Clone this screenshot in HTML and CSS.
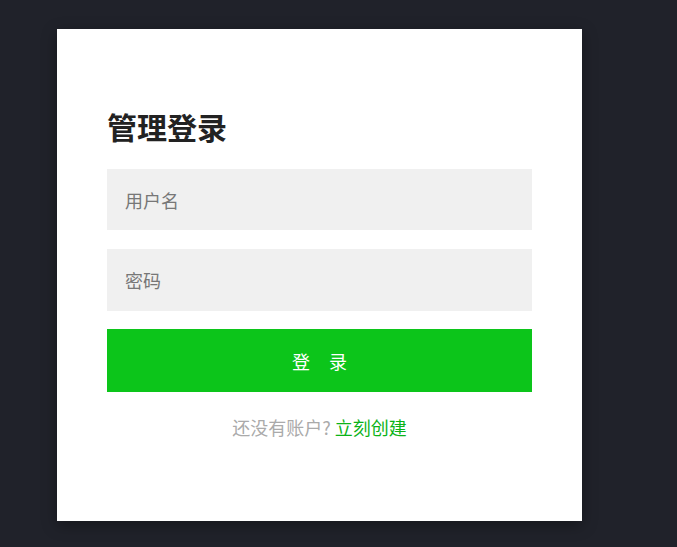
FILE: index.html
```html
<!DOCTYPE html>
<html lang="zh-CN">
<head>
    <meta charset="UTF-8">
    <title>管理登录</title>
    <link rel="stylesheet" href="styles.css">
</head>
<body>

<div class="login-box">
    <h2 class="title">管理登录</h2>

    <!-- 表单 -->
    <form class="login-form">
        <input type="text" class="field" placeholder="用户名">
        <input type="password" class="field" placeholder="密码">
        <button type="button" class="btn">登录</button>
    </form>

    <div class="tip">还没有账户? <a href="#" class="tip-link">立刻创建</a></div>
</div>

</body>
</html>
```

FILE: styles.css
```css
body {
    margin: 0;
    padding: 29px 0 0 57px;
    background-color: #20222a;
    font-family: "Noto Sans CJK SC", "Noto Sans", sans-serif;
    height: 547px;
    box-sizing: border-box;
    overflow: hidden;
}

.login-box {
    width: 525px;
    height: 492px;
    box-sizing: border-box;
    padding: 77px 50px 0;
    background: #fff;
    box-shadow: 0 4px 14px rgba(0, 0, 0, 0.35);
}

.title {
    margin: 0 0 23px;
    font-size: 30px;
    line-height: 40px;
    font-weight: bold;
    color: #222;
}

.login-form {
    display: flex;
    flex-direction: column;
}

.field {
    height: 61px;
    margin: 0 0 19px;
    padding: 0 18px;
    border: none;
    outline: none;
    background: #f0f0f0;
    font-family: inherit;
    font-size: 18px;
    color: #333;
    box-sizing: border-box;
}

.field + .field {
    height: 62px;
    margin-bottom: 18px;
}

.field::placeholder {
    color: #777;
}

.btn {
    height: 63px;
    border: none;
    background: #0cc51a;
    color: #fff;
    font-family: inherit;
    font-size: 18px;
    letter-spacing: 19px;
    text-indent: 19px;
    cursor: pointer;
}

.tip {
    margin-top: 23px;
    text-align: center;
    font-size: 18px;
    line-height: 24px;
    color: #aaa;
}

.tip-link {
    color: #0bb318;
    text-decoration: none;
}
```
